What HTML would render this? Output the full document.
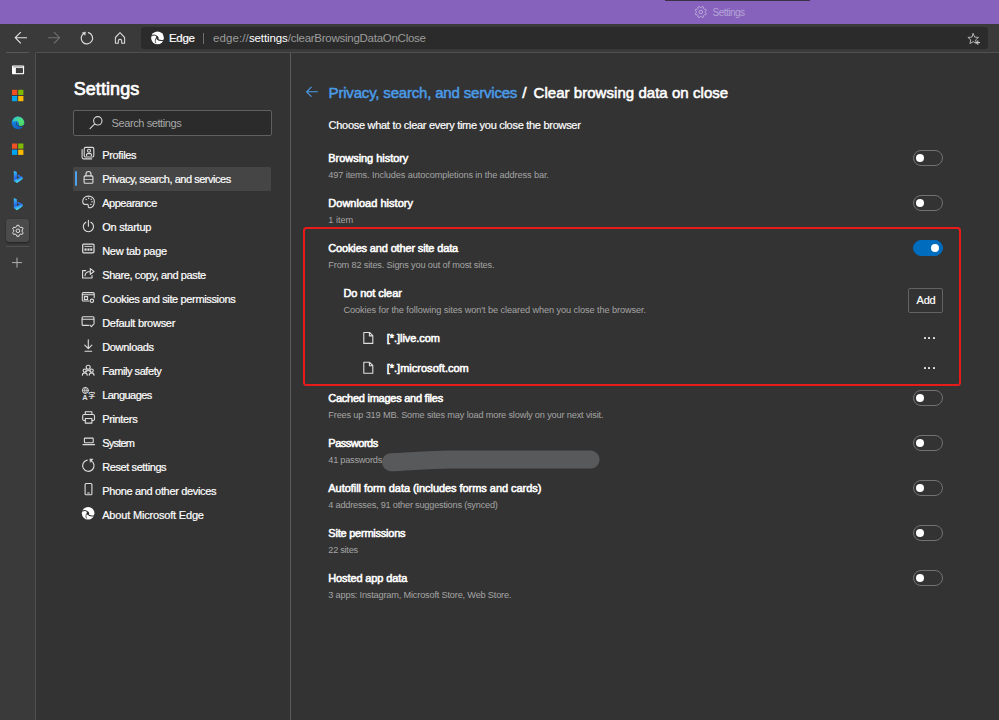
<!DOCTYPE html>
<html lang="en">
<head>
<meta charset="utf-8">
<title>Settings</title>
<style>
*{box-sizing:border-box;margin:0;padding:0}
html,body{width:999px;height:720px;overflow:hidden;background:#333333}
body{position:relative;font-family:"Liberation Sans",sans-serif;color:#fff;font-size:11px}
.abs{position:absolute}
.t{position:absolute;white-space:nowrap;line-height:1}
#titlebar{left:0;top:0;width:999px;height:24px;background:#8762bc}
#tabline{left:665px;top:0;width:145px;height:1px;background:#3b3146}
#toolbar{left:0;top:24px;width:999px;height:28px;background:#3a3a3a}
#addr{left:141px;top:27px;width:847px;height:22px;background:#2b2b2b;border-radius:3px}
#vtabs{left:0;top:52px;width:36px;height:668px;background:#3a3a3a}
#vtabline{left:6px;top:52px;width:23px;height:1px;background:#585858}
#content{left:35px;top:52px;width:964px;height:668px;background:#333333;border-left:1px solid #505050;border-top:1px solid #505050;border-top-left-radius:2px}
#divider{left:290px;top:53px;width:1px;height:667px;background:#5a5a5a}
#search{left:73px;top:110px;width:198.5px;height:25.5px;background:#2b2b2b;border:1px solid #606060;border-radius:2px}
#sel{left:73.4px;top:167px;width:197.8px;height:23.7px;background:#454545;border-radius:1.5px}
#selbar{left:74.8px;top:171.4px;width:2.5px;height:14.9px;background:#4ea3ea;border-radius:1px}
#geartile{left:6px;top:218.7px;width:23.3px;height:23.8px;background:#4b4b4b;border-radius:3px;box-shadow:0 1px 2px rgba(0,0,0,.45)}
#vtabline2{left:6px;top:246.2px;width:23px;height:1px;background:#505050}
.tg{position:absolute;left:912.7px;width:30.3px;height:16px;border:1.4px solid #727272;border-radius:8px}
.tg i{position:absolute;left:2.3px;top:2.6px;width:8px;height:8px;border-radius:50%;background:#fff}
.tg.on{background:#006cbe;border-color:#006cbe}
.tg.on i{left:17.4px}
#redbox{left:302.5px;top:227.3px;width:658.8px;height:159.1px;border:2.8px solid #e81b1b;border-radius:3.5px}
#addbtn{left:908.2px;top:288.2px;width:34.9px;height:24.4px;border:1px solid #636363;border-radius:2px}
.dots{position:absolute;left:923.5px;width:12px;height:2px}
.dots i{position:absolute;top:0;width:2px;height:2px;background:#e2e2e2;border-radius:30%}
#blob{left:382px;top:450.5px;width:218.5px;height:19.5px;background:#555555;border-radius:10px}
svg#icons{position:absolute;left:0;top:0;width:999px;height:720px;overflow:visible}
.s{fill:none;stroke:#dedede;stroke-width:1.1;stroke-linecap:round;stroke-linejoin:round}
</style>
</head>
<body>
<div class="abs" id="titlebar"></div>
<div class="abs" id="tabline"></div>
<div class="abs" id="toolbar"></div>
<div class="abs" id="addr"></div>
<div class="abs" id="vtabs"></div>
<div class="abs" id="content"></div>
<div class="abs" id="vtabline"></div>
<div class="abs" id="divider"></div>
<div class="abs" id="geartile"></div>
<div class="abs" id="vtabline2"></div>
<div class="abs" style="left:203px;top:33px;width:1px;height:11px;background:#6e6e6e"></div>
<div class="abs" id="search"></div>
<div class="abs" id="sel"></div>
<div class="abs" id="selbar"></div>
<div class="abs" id="addbtn"></div>

<div class="tg" style="top:150px"><i></i></div>
<div class="tg" style="top:195px"><i></i></div>
<div class="tg on" style="top:240px"><i></i></div>
<div class="tg" style="top:390px"><i></i></div>
<div class="tg" style="top:435px"><i></i></div>
<div class="tg" style="top:480px"><i></i></div>
<div class="tg" style="top:525px"><i></i></div>
<div class="tg" style="top:570px"><i></i></div>
<div class="dots" style="top:336.7px"><i style="left:0"></i><i style="left:4.9px"></i><i style="left:9.8px"></i></div>
<div class="dots" style="top:366.7px"><i style="left:0"></i><i style="left:4.9px"></i><i style="left:9.8px"></i></div>

<div class="t" id="tabtitle" style="left:712.60px;top:8.00px;font-size:10px;font-weight:normal;color:#b5a3d8;letter-spacing:-0.543px;">Settings</div>
<div class="t" id="edgelbl" style="left:169.10px;top:33.00px;font-size:11.5px;font-weight:normal;color:#ffffff;letter-spacing:-0.390px;-webkit-text-stroke:0.2px #fff;">Edge</div>
<div class="t" id="url1" style="left:213.00px;top:33.00px;font-size:11.5px;font-weight:normal;color:#9c9c9c;letter-spacing:0.104px;">edge://</div>
<div class="t" id="url2" style="left:248.90px;top:33.00px;font-size:11.5px;font-weight:normal;color:#ffffff;letter-spacing:-0.093px;">settings</div>
<div class="t" id="url3" style="left:287.80px;top:33.00px;font-size:11.5px;font-weight:normal;color:#9c9c9c;letter-spacing:-0.262px;">/clearBrowsingDataOnClose</div>
<div class="t" id="h1" style="left:73.70px;top:80.00px;font-size:18px;font-weight:normal;color:#ffffff;letter-spacing:0.069px;-webkit-text-stroke:0.7px #fff;">Settings</div>
<div class="t" id="searchph" style="left:111.60px;top:118.00px;font-size:11px;font-weight:normal;color:#a8a8a8;letter-spacing:-0.409px;">Search settings</div>
<div class="t" id="nav0" style="left:102.20px;top:150.00px;font-size:11px;font-weight:normal;color:#ffffff;letter-spacing:-0.336px;-webkit-text-stroke:0.2px #fff;">Profiles</div>
<div class="t" id="nav1" style="left:102.20px;top:174.00px;font-size:11px;font-weight:normal;color:#ffffff;letter-spacing:-0.471px;-webkit-text-stroke:0.2px #fff;">Privacy, search, and services</div>
<div class="t" id="nav2" style="left:102.20px;top:198.00px;font-size:11px;font-weight:normal;color:#ffffff;letter-spacing:-0.473px;-webkit-text-stroke:0.2px #fff;">Appearance</div>
<div class="t" id="nav3" style="left:102.20px;top:222.00px;font-size:11px;font-weight:normal;color:#ffffff;letter-spacing:-0.236px;-webkit-text-stroke:0.2px #fff;">On startup</div>
<div class="t" id="nav4" style="left:102.20px;top:246.00px;font-size:11px;font-weight:normal;color:#ffffff;letter-spacing:-0.266px;-webkit-text-stroke:0.2px #fff;">New tab page</div>
<div class="t" id="nav5" style="left:102.20px;top:270.00px;font-size:11px;font-weight:normal;color:#ffffff;letter-spacing:-0.397px;-webkit-text-stroke:0.2px #fff;">Share, copy, and paste</div>
<div class="t" id="nav6" style="left:102.20px;top:294.00px;font-size:11px;font-weight:normal;color:#ffffff;letter-spacing:-0.353px;-webkit-text-stroke:0.2px #fff;">Cookies and site permissions</div>
<div class="t" id="nav7" style="left:102.20px;top:318.00px;font-size:11px;font-weight:normal;color:#ffffff;letter-spacing:-0.276px;-webkit-text-stroke:0.2px #fff;">Default browser</div>
<div class="t" id="nav8" style="left:102.20px;top:342.00px;font-size:11px;font-weight:normal;color:#ffffff;letter-spacing:-0.325px;-webkit-text-stroke:0.2px #fff;">Downloads</div>
<div class="t" id="nav9" style="left:102.20px;top:366.00px;font-size:11px;font-weight:normal;color:#ffffff;letter-spacing:-0.431px;-webkit-text-stroke:0.2px #fff;">Family safety</div>
<div class="t" id="nav10" style="left:102.20px;top:390.00px;font-size:11px;font-weight:normal;color:#ffffff;letter-spacing:-0.539px;-webkit-text-stroke:0.2px #fff;">Languages</div>
<div class="t" id="nav11" style="left:102.20px;top:414.00px;font-size:11px;font-weight:normal;color:#ffffff;letter-spacing:-0.351px;-webkit-text-stroke:0.2px #fff;">Printers</div>
<div class="t" id="nav12" style="left:102.20px;top:438.00px;font-size:11px;font-weight:normal;color:#ffffff;letter-spacing:-0.781px;-webkit-text-stroke:0.2px #fff;">System</div>
<div class="t" id="nav13" style="left:102.20px;top:462.00px;font-size:11px;font-weight:normal;color:#ffffff;letter-spacing:-0.407px;-webkit-text-stroke:0.2px #fff;">Reset settings</div>
<div class="t" id="nav14" style="left:102.20px;top:486.00px;font-size:11px;font-weight:normal;color:#ffffff;letter-spacing:-0.335px;-webkit-text-stroke:0.2px #fff;">Phone and other devices</div>
<div class="t" id="nav15" style="left:102.20px;top:510.00px;font-size:11px;font-weight:normal;color:#ffffff;letter-spacing:-0.179px;-webkit-text-stroke:0.2px #fff;">About Microsoft Edge</div>
<div class="t" id="crumb1" style="left:328.60px;top:85.00px;font-size:15px;font-weight:normal;color:#4b9ce8;letter-spacing:-0.185px;-webkit-text-stroke:0.5px #4b9ce8;">Privacy, search, and services</div>
<div class="t" id="crumbs" style="left:522.20px;top:85.00px;font-size:15.5px;font-weight:normal;color:#ffffff;letter-spacing:0.000px;-webkit-text-stroke:0.55px #fff;">/</div>
<div class="t" id="crumb2" style="left:533.50px;top:85.00px;font-size:15px;font-weight:normal;color:#ffffff;letter-spacing:0.045px;-webkit-text-stroke:0.55px #fff;">Clear browsing data on close</div>
<div class="t" id="choose" style="left:328.60px;top:120.00px;font-size:11px;font-weight:normal;color:#ffffff;letter-spacing:-0.287px;-webkit-text-stroke:0.2px #fff;">Choose what to clear every time you close the browser</div>
<div class="t" id="rt0" style="left:328.30px;top:153.00px;font-size:11px;font-weight:normal;color:#ffffff;letter-spacing:-0.044px;-webkit-text-stroke:0.55px #fff;">Browsing history</div>
<div class="t" id="rs0" style="left:328.30px;top:171.00px;font-size:9.2px;font-weight:normal;color:#a4a4a4;letter-spacing:-0.114px;">497 items. Includes autocompletions in the address bar.</div>
<div class="t" id="rt1" style="left:328.30px;top:198.00px;font-size:11px;font-weight:normal;color:#ffffff;letter-spacing:0.020px;-webkit-text-stroke:0.55px #fff;">Download history</div>
<div class="t" id="rs1" style="left:328.30px;top:216.00px;font-size:9.2px;font-weight:normal;color:#a4a4a4;letter-spacing:-0.022px;">1 item</div>
<div class="t" id="rt2" style="left:328.30px;top:243.00px;font-size:11px;font-weight:normal;color:#ffffff;letter-spacing:-0.156px;-webkit-text-stroke:0.55px #fff;">Cookies and other site data</div>
<div class="t" id="rs2" style="left:328.30px;top:261.00px;font-size:9.2px;font-weight:normal;color:#a4a4a4;letter-spacing:-0.165px;">From 82 sites. Signs you out of most sites.</div>
<div class="t" id="rt3" style="left:343.40px;top:288.00px;font-size:11px;font-weight:normal;color:#ffffff;letter-spacing:-0.076px;-webkit-text-stroke:0.55px #fff;">Do not clear</div>
<div class="t" id="rs3" style="left:343.40px;top:306.00px;font-size:9.2px;font-weight:normal;color:#a4a4a4;letter-spacing:-0.086px;">Cookies for the following sites won't be cleared when you close the browser.</div>
<div class="t" id="rt4" style="left:328.30px;top:393.00px;font-size:11px;font-weight:normal;color:#ffffff;letter-spacing:-0.255px;-webkit-text-stroke:0.55px #fff;">Cached images and files</div>
<div class="t" id="rs4" style="left:328.30px;top:411.00px;font-size:9.2px;font-weight:normal;color:#a4a4a4;letter-spacing:-0.161px;">Frees up 319 MB. Some sites may load more slowly on your next visit.</div>
<div class="t" id="rt5" style="left:328.30px;top:438.00px;font-size:11px;font-weight:normal;color:#ffffff;letter-spacing:-0.489px;-webkit-text-stroke:0.55px #fff;">Passwords</div>
<div class="t" id="rs5" style="left:328.30px;top:456.00px;font-size:9.2px;font-weight:normal;color:#a4a4a4;letter-spacing:-0.249px;">41 passwords</div>
<div class="t" id="rt6" style="left:328.30px;top:483.00px;font-size:11px;font-weight:normal;color:#ffffff;letter-spacing:-0.049px;-webkit-text-stroke:0.55px #fff;">Autofill form data (includes forms and cards)</div>
<div class="t" id="rs6" style="left:328.30px;top:501.00px;font-size:9.2px;font-weight:normal;color:#a4a4a4;letter-spacing:-0.211px;">4 addresses, 91 other suggestions (synced)</div>
<div class="t" id="rt7" style="left:328.30px;top:528.00px;font-size:11px;font-weight:normal;color:#ffffff;letter-spacing:-0.225px;-webkit-text-stroke:0.55px #fff;">Site permissions</div>
<div class="t" id="rs7" style="left:328.30px;top:546.00px;font-size:9.2px;font-weight:normal;color:#a4a4a4;letter-spacing:-0.271px;">22 sites</div>
<div class="t" id="rt8" style="left:328.30px;top:573.00px;font-size:11px;font-weight:normal;color:#ffffff;letter-spacing:-0.122px;-webkit-text-stroke:0.55px #fff;">Hosted app data</div>
<div class="t" id="rs8" style="left:328.30px;top:591.00px;font-size:9.2px;font-weight:normal;color:#a4a4a4;letter-spacing:-0.181px;">3 apps: Instagram, Microsoft Store, Web Store.</div>
<div class="t" id="site0" style="left:386.70px;top:333.00px;font-size:11px;font-weight:normal;color:#ffffff;letter-spacing:-0.041px;-webkit-text-stroke:0.55px #fff;">[*.]live.com</div>
<div class="t" id="site1" style="left:386.70px;top:363.00px;font-size:11px;font-weight:normal;color:#ffffff;letter-spacing:0.011px;-webkit-text-stroke:0.55px #fff;">[*.]microsoft.com</div>
<div class="t" id="addtxt" style="left:916.50px;top:295.00px;font-size:11px;font-weight:normal;color:#ffffff;letter-spacing:-0.193px;-webkit-text-stroke:0.2px #fff;">Add</div>

<svg id="icons" viewBox="0 0 999 720">
<defs>
<linearGradient id="gEdge" x1="0" y1="0" x2="0" y2="1"><stop offset="0" stop-color="#35c6f3"/><stop offset="0.55" stop-color="#1279d6"/><stop offset="1" stop-color="#0f62c4"/></linearGradient>
<linearGradient id="gEdgeG" x1="0" y1="0" x2="1" y2="1"><stop offset="0" stop-color="#2fc4d8"/><stop offset="0.6" stop-color="#52e070"/><stop offset="1" stop-color="#3fd060"/></linearGradient>
<linearGradient id="gBing" x1="0" y1="0" x2="0.25" y2="1"><stop offset="0" stop-color="#3ccaf8"/><stop offset="0.62" stop-color="#2566e8"/><stop offset="0.95" stop-color="#45dcf5"/></linearGradient>
<g id="gearp"><path d="M1.33 4.09 L1.05 5.50 L-1.05 5.50 L-1.33 4.09 L-2.88 3.20 L-4.24 3.66 L-5.29 1.84 L-4.21 0.89 L-4.21 -0.89 L-5.29 -1.84 L-4.24 -3.66 L-2.88 -3.20 L-1.33 -4.09 L-1.05 -5.50 L1.05 -5.50 L1.33 -4.09 L2.88 -3.20 L4.24 -3.66 L5.29 -1.84 L4.21 -0.89 L4.21 0.89 L5.29 1.84 L4.24 3.66 L2.88 3.20 Z" stroke-linejoin="round"/><circle cx="0" cy="0" r="1.8"/></g><g id="gearp8"><path d="M4.46 0.63 L5.51 1.46 L4.93 2.86 L3.60 2.70 L2.70 3.60 L2.86 4.93 L1.46 5.51 L0.63 4.46 L-0.63 4.46 L-1.46 5.51 L-2.86 4.93 L-2.70 3.60 L-3.60 2.70 L-4.93 2.86 L-5.51 1.46 L-4.46 0.63 L-4.46 -0.63 L-5.51 -1.46 L-4.93 -2.86 L-3.60 -2.70 L-2.70 -3.60 L-2.86 -4.93 L-1.46 -5.51 L-0.63 -4.46 L0.63 -4.46 L1.46 -5.51 L2.86 -4.93 L2.70 -3.60 L3.60 -2.70 L4.93 -2.86 L5.51 -1.46 L4.46 -0.63 Z" stroke-linejoin="round"/><circle cx="0" cy="0" r="1.8"/></g>
<g id="edgew"><circle cx="0" cy="0" r="6.4" fill="#fff"/><g fill="none" stroke="#303030" stroke-linecap="round"><path d="M-5.9 -2.3 C-3.8 -3.3 -1.8 -3 -0.6 -1.5" stroke-width="1.05"/><path d="M-0.3 1 C1 2.7 3.4 3 6.4 2.4" stroke-width="1.05"/><path d="M-0.9 -0.4 C-2.4 1.2 -2.7 3 -1.8 4.9" stroke-width="0.8"/></g><ellipse cx="-0.15" cy="-0.1" rx="1.25" ry="1.75" fill="#303030" transform="rotate(-20)"/></g>
</defs>

<!-- title bar gear -->
<g transform="translate(700.8 12.05)" fill="none" stroke="#bcabdc" stroke-width="1"><use href="#gearp8"/></g>

<!-- toolbar -->
<g class="s" style="stroke:#e4e4e4;stroke-width:1.15;stroke-linecap:butt"><path d="M27 37.7 H15.4 M20.8 32.1 L15.2 37.7 L20.8 43.3"/></g>
<g class="s" style="stroke:#707070;stroke-width:1.15;stroke-linecap:butt"><path d="M48.1 37.7 H59.4 M54 32.1 L59.6 37.7 L54 43.3"/></g>
<g class="s" style="stroke:#dcdcdc;stroke-width:1.2"><path d="M88.4 32.7 A5.7 5.7 0 1 1 84.05 33.26"/><path d="M82.5 32.7 L85.5 32 L85.1 35 Z" style="fill:#dcdcdc;stroke-width:.5"/></g>
<g class="s" style="stroke:#d6d6d6;stroke-width:1.1"><path d="M115.4 37.5 L120 32.7 L124.6 37.5 V43.3 H121.7 V40.8 Q121.7 39.4 120 39.4 Q118.3 39.4 118.3 40.8 V43.3 H115.4 Z"/></g>
<use href="#edgew" transform="translate(157.5 37.9)"/>
<g class="s" style="stroke:#b4b4b4;stroke-width:1"><path d="M973.2 33.6 L974.7 37.1 L978.5 37.4 L975.6 39.9 L976.5 43.6 L973.2 41.6 L969.9 43.6 L970.8 39.9 L967.9 37.4 L971.7 37.1 Z"/><path d="M977.8 40.8 V44.4 M976 42.6 H979.6" style="stroke:#d0d0d0"/></g>

<!-- vertical tabs -->
<rect x="12" y="65.4" width="12.1" height="8.8" rx=".8" fill="#fff"/><rect x="13.2" y="66.1" width="9.9" height="1.5" fill="#b8b8b8"/><rect x="16.2" y="68.4" width="6.4" height="4.4" fill="#3e3e3e" stroke="#1c1c1c" stroke-width=".6"/>
<g id="ms"><rect x="12" y="89.8" width="5.2" height="5.2" fill="#f25022"/><rect x="18.2" y="89.8" width="5.2" height="5.2" fill="#7fba00"/><rect x="12" y="96" width="5.2" height="5.2" fill="#00a4ef"/><rect x="18.2" y="96" width="5.2" height="5.2" fill="#ffb900"/></g>
<use href="#ms" transform="translate(0 53.7)"/>
<g transform="translate(18 122.9)"><circle r="6.3" fill="url(#gEdge)"/><path d="M-1.5 -6.1 C3 -6.8 6.6 -3.2 6.2 0.6 C5.9 3 3.4 3.6 1.2 2.6 C0.6 1.6 1.2 0.4 0.4 -0.8 C-0.8 -2.6 -3.2 -2.6 -5 -1.2 C-4.6 -3.8 -3.4 -5.4 -1.5 -6.1 Z" fill="url(#gEdgeG)"/><path d="M-0.4 -1 C-1.6 -0.6 -1.6 1.2 -0.2 2.4 C1.6 3.8 4.4 3.6 6.4 2.2 L6.6 4.6 L3 4 C1 4.2 -0.8 3.2 -1.8 1.6 C-2.4 0.4 -1.8 -1 -0.4 -1 Z" fill="#3a3a3a"/></g>
<g id="bing"><path d="M13.8 170.7 L16.9 172.1 V178.9 L19.8 177.5 L17.9 176.7 L17.3 174.2 L22.7 176.9 V179.1 L17 183.1 L13.8 180.9 Z" fill="url(#gBing)"/></g>
<use href="#bing" transform="translate(0 27.2)"/>
<g transform="translate(17.9 230.8)" fill="none" stroke="#e0e0e0" stroke-width="1"><use href="#gearp"/></g>
<path d="M17 257.6 V267.6 M12 262.6 H22" fill="none" stroke="#b0b0b0" stroke-width="1"/>

<!-- search -->
<g class="s" style="stroke:#d6d6d6"><circle cx="97.8" cy="120.8" r="4.2"/><path d="M94.8 123.9 L90 128.7"/></g>

<!-- nav icons -->
<g class="s">
<!-- profiles -->
<rect x="84.2" y="147.4" width="9.6" height="9.6" rx="1.4"/><circle cx="89" cy="150.8" r="1.5"/><path d="M86.6 155.6 V154.6 Q86.6 153.6 87.6 153.6 H90.4 Q91.4 153.6 91.4 154.6 V155.6"/><path d="M82.1 149.6 V157.4 Q82.1 158.9 83.6 158.9 H91.6"/>
<!-- lock -->
<rect x="84.1" y="175.9" width="8.8" height="7.3" rx="1"/><path d="M86 175.9 V174 A2.5 2.5 0 0 1 91 174 V175.9"/><path d="M84.3 179.5 H92.7" style="stroke-width:.9;opacity:.8"/>
<!-- palette -->
<path d="M88.4 196.1 C92 196.1 94.4 198.6 94.3 201.6 C94.2 204.8 92.6 207.4 90.4 207.7 C88.8 207.9 88 207 88.2 205.8 C88.4 204.6 87.6 204 86.4 204.4 C84.4 205 82.6 203.6 82.7 201.4 C82.8 198.4 85.2 196.1 88.4 196.1 Z"/>
<g style="fill:#dedede;stroke:none"><circle cx="86.2" cy="199.6" r=".75"/><circle cx="88.6" cy="198.3" r=".75"/><circle cx="91.2" cy="199.2" r=".75"/><circle cx="92" cy="201.8" r=".75"/><circle cx="90.8" cy="204.4" r=".75"/></g>
<!-- power -->
<path d="M85.9 222.2 A5.1 5.1 0 1 0 90.9 222.2 M88.4 220.3 V226.2"/>
<!-- new tab -->
<rect x="82.7" y="244" width="11.3" height="8.8" rx="1" style="stroke-width:1.25"/><path d="M84.8 246.4 H91.9" style="stroke-width:.9"/><g style="fill:#dedede;stroke:none"><rect x="84.5" y="248.4" width="2.1" height="2.3"/><rect x="87.4" y="248.4" width="2.1" height="2.3"/><rect x="90.2" y="248.4" width="2.1" height="2.3"/></g>
<!-- share -->
<path d="M85.8 270.6 H82.6 V278 H92 V275.6"/><path d="M85 275.6 C85.2 273 87 271.6 90.3 271.5 M90.3 268.6 L94 271.5 L90.3 274.4 Z"/>
<!-- cookies & site perms -->
<path d="M89 301 H83.3 Q82.3 301 82.3 300 V293.6 Q82.3 292.6 83.3 292.6 H93.2 Q94.2 292.6 94.2 293.6 V297.8"/><path d="M82.5 294.8 H94"/><rect x="84.4" y="296.6" width="3.2" height="2.9"/><circle cx="91.9" cy="300.8" r="1.7"/>
<!-- default browser -->
<path d="M88.6 325.4 H83.1 Q82.1 325.4 82.1 324.4 V317.8 Q82.1 316.8 83.1 316.8 H93 Q94 316.8 94 317.8 V322.4"/><path d="M82.3 319.2 H93.8"/><path d="M90 325.2 L91.4 326.6 L94.2 323.6"/>
<!-- downloads -->
<path d="M88.3 339.9 V348.6 M84.8 345.2 L88.3 348.7 L91.8 345.2 M85 351.3 H91.6"/>
<!-- family -->
<circle cx="88.2" cy="367.2" r="2"/><circle cx="84.7" cy="370.6" r="1.6"/><circle cx="91.7" cy="370.6" r="1.6"/><path d="M82.4 375.3 A2.4 2.4 0 0 1 87.2 375.3 M89.2 375.3 A2.4 2.4 0 0 1 94 375.3 M86 371.6 Q88.2 369.4 90.4 371.6"/>
<!-- languages -->
<circle cx="85.4" cy="390.4" r="3" style="stroke-width:1"/><path d="M82.6 390.4 H88.2 M85.4 387.5 C84 389.1 84 391.7 85.4 393.3 M85.4 387.5 C86.8 389.1 86.8 391.7 85.4 393.3" style="stroke-width:.7"/>
<!-- printer -->
<g transform="translate(0.3 0.9)"><path d="M85 413.6 V410.8 H91.6 V413.6"/><rect x="82.4" y="413.6" width="11.8" height="6" rx="1.4"/><rect x="85" y="417.6" width="6.6" height="4.6" style="fill:#333"/></g>
<!-- system -->
<rect x="84.4" y="438.1" width="8.8" height="4.6" rx=".4"/><path d="M83 444.6 H94.6"/>
<!-- reset -->
<path d="M87.2 460.1 A5.7 5.7 0 1 0 91.1 460.7"/><path d="M90 459 L93 459.1 L90.5 462.2 Z" style="fill:#dedede;stroke-width:.5"/>
<!-- phone -->
<rect x="85.1" y="483.5" width="6.8" height="11.3" rx="1"/><path d="M87.6 493 H89.4"/>
</g>
<text x="82.2" y="399.6" font-family="Liberation Sans, sans-serif" font-size="7.5" font-weight="bold" fill="#dedede">A</text>
<text x="88.2" y="397.8" font-family="Noto Sans CJK SC, sans-serif" font-size="7" font-weight="bold" fill="#dedede">字</text>
<use href="#edgew" transform="translate(88.15 513.3) scale(0.98)"/>

<!-- redaction scribble -->
<path d="M391 462.2 C410 461.4 430 459.7 450 459.6 L590.6 459.6" fill="none" stroke="#58595b" stroke-width="18" stroke-linecap="round" stroke-linejoin="round"/>
<!-- breadcrumb arrow -->
<path d="M317.4 91.8 H306.6 M311.2 87.2 L306.6 91.8 L311.2 96.4" fill="none" stroke="#4b9ce8" stroke-width="1.1" stroke-linecap="round" stroke-linejoin="round"/>

<!-- file icons -->
<g class="s" id="file"><path d="M363.8 332.5 H369.6 L372.8 335.7 V343.4 H363.8 Z M369.4 332.6 V335.9 H372.7"/></g>
<use href="#file" transform="translate(0 29.8)"/>
</svg>

<div class="abs" id="redbox"></div>
</body>
</html>
